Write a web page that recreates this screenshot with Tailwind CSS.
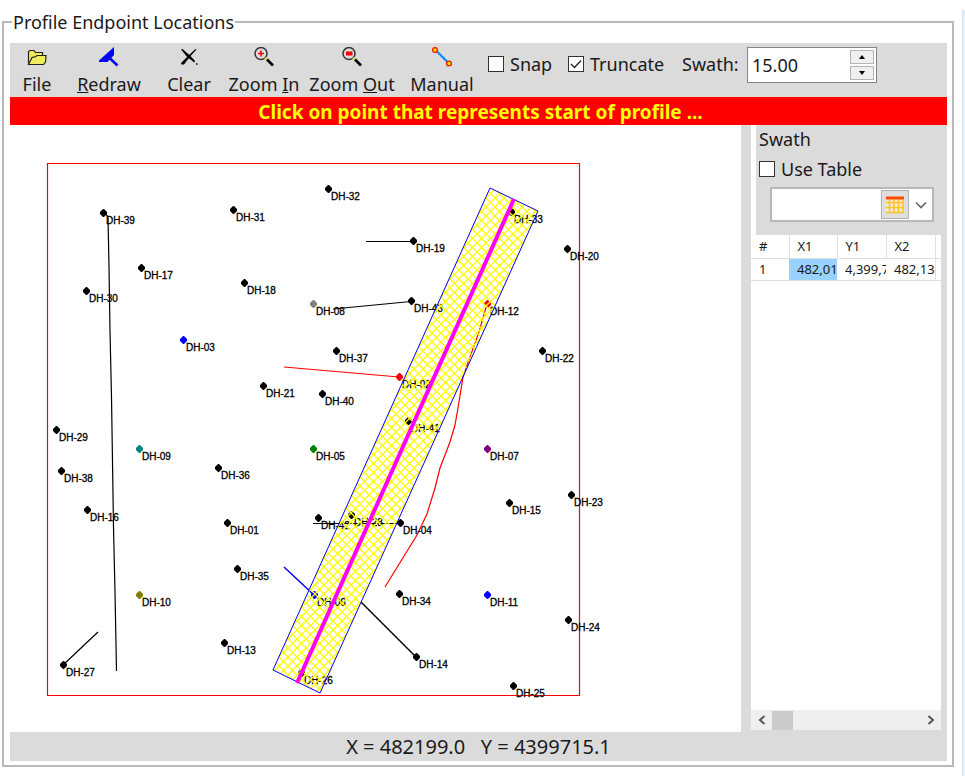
<!DOCTYPE html>
<html lang="en">
<head>
    <meta charset="UTF-8">
    <meta name="viewport" content="width=device-width, initial-scale=1.0">
    <title>Profile Endpoint Locations</title>
    <script src="https://cdn.jsdelivr.net/npm/@tailwindcss/browser@4"></script>
</head>
<body class="bg-white text-[#1a1a1a] font-['Noto_Sans','Open_Sans',sans-serif] text-lg leading-6">
    <div class="flex min-h-screen pl-0.5">
        <fieldset class="flex-1 min-w-0 self-start mt-2 border-2 border-[#b8b8b8] pl-1.5 pr-[5px] pt-[7px] pb-1">
            <legend class="ml-0.5 px-px leading-7">Profile Endpoint Locations</legend>

            <!-- Toolbar -->
            <div class="flex bg-[#dbdbdb] h-[54px]">
                <button type="button" class="w-[54px] flex flex-col items-center pt-1 whitespace-nowrap">
                    <svg class="w-5 h-[25px]" viewBox="0 0 20 25" aria-hidden="true">
                        <path d="M1.5 16.5V4.5L3 3.5H7L8.500 5.500H15.500V8.500" fill="#eeea5a" stroke="#222" stroke-width="1.2"/>
                        <path d="M1.5 17.5L5 10.5L9 9.5L10 8.5H19L18.5 15L16.5 17.5Z" fill="#f0ec60" stroke="#222" stroke-width="1.2"/>
                    </svg>
                    <span>File</span>
                </button>
                <button type="button" class="w-[90px] flex flex-col items-center pt-1 whitespace-nowrap">
                    <svg class="w-5 h-[25px]" viewBox="0 0 20 25" aria-hidden="true">
                        <path d="M15 0V8L8.500 15H0V13.500Z" fill="#00f"/>
                        <path d="M10 10.5L18.500 18.500" stroke="#00f" stroke-width="2.5"/>
                    </svg>
                    <span><u>R</u>edraw</span>
                </button>
                <button type="button" class="w-[70px] flex flex-col items-center pt-1 whitespace-nowrap">
                    <svg class="w-5 h-[25px]" viewBox="0 0 20 25" aria-hidden="true">
                        <path d="M2 2.5L3.500 2L11 8.500L16 14L15 14.500L9 11Z" fill="#000"/>
                        <path d="M17.500 2.500L11.500 9L5 17.500L2.500 17.500L2 16L8.500 9.500L16.500 2Z" fill="#000"/>
                        <path d="M10 9.500L15.500 15" stroke="#000" stroke-width="1.5"/>
                        <path d="M17 17h1.5" stroke="#000" stroke-width="1.5"/>
                    </svg>
                    <span>Clear</span>
                </button>
                <button type="button" class="w-20 flex flex-col items-center pt-1 whitespace-nowrap">
                    <svg class="w-5 h-[25px]" viewBox="0 0 20 25" aria-hidden="true">
                        <circle cx="7" cy="6.5" r="6" fill="#d8dcdc" stroke="#333" stroke-width="1.5"/>
                        <path d="M4 6.5h6M7 3.5v6" stroke="#f00" stroke-width="1.6"/>
                        <path d="M11 11L13.5 13" stroke="#dcd94a" stroke-width="2.5"/>
                        <path d="M13 12.5L19 18.5" stroke="#000" stroke-width="2.6"/>
                    </svg>
                    <span>Zoom <u>I</u>n</span>
                </button>
                <button type="button" class="w-24 flex flex-col items-center pt-1 whitespace-nowrap">
                    <svg class="w-5 h-[25px]" viewBox="0 0 20 25" aria-hidden="true">
                        <circle cx="7" cy="6.5" r="6" fill="#d8dcdc" stroke="#333" stroke-width="1.5"/>
                        <path d="M4 4.5h6.500v4H4z" fill="#f00"/>
                        <path d="M11 11L13.5 13" stroke="#dcd94a" stroke-width="2.5"/>
                        <path d="M13 12.5L19 18.5" stroke="#000" stroke-width="2.6"/>
                    </svg>
                    <span>Zoom <u>O</u>ut</span>
                </button>
                <button type="button" class="w-[84px] flex flex-col items-center pt-1 whitespace-nowrap">
                    <svg class="w-5 h-[25px]" viewBox="0 0 20 25" aria-hidden="true">
                        <path d="M3.5 3L17 16.5" stroke="#0a80ff" stroke-width="2"/>
                        <circle cx="3" cy="3" r="2.4" fill="#ffe000" stroke="#f21c00" stroke-width="1.4"/>
                        <circle cx="17" cy="16.5" r="2.4" fill="#ffe000" stroke="#f21c00" stroke-width="1.4"/>
                    </svg>
                    <span>Manual</span>
                </button>

                <div class="flex items-start pt-1 pl-1">
                    <label class="flex items-center gap-1.5 h-[34px] w-20">
                        <input type="checkbox" class="appearance-none size-4 border border-[#333] bg-white">
                        Snap
                    </label>
                    <label class="flex items-center gap-1.5 h-[34px] w-[114px]">
                        <span class="grid size-4 shrink-0">
                            <input type="checkbox" checked class="peer appearance-none size-4 border border-[#333] bg-white [grid-area:1/1]">
                            <svg class="size-4 hidden peer-checked:block pointer-events-none [grid-area:1/1]" viewBox="0 0 16 16" aria-hidden="true">
                                <path d="M3 8L6.5 11.5L13 4.5" fill="none" stroke="#222" stroke-width="1.3"/>
                            </svg>
                        </span>
                        Truncate
                    </label>
                    <label for="swath" class="leading-[34px] w-[65px]">Swath:</label>
                    <div class="flex w-[130px] h-9 border border-[#858585] bg-white p-0.5">
                        <input id="swath" type="text" value="15.00" class="flex-1 min-w-0 pl-0.5 outline-none">
                        <div class="w-6 flex flex-col gap-0.5">
                            <button type="button" aria-label="Increase" class="flex-1 grid place-items-center border border-[#b5b5b5] bg-[#f0f0f0]">
                                <svg class="w-1.5 h-1" viewBox="0 0 6 4" aria-hidden="true"><path d="M3 0L6 4H0Z"/></svg>
                            </button>
                            <button type="button" aria-label="Decrease" class="flex-1 grid place-items-center border border-[#b5b5b5] bg-[#f0f0f0]">
                                <svg class="w-1.5 h-1" viewBox="0 0 6 4" aria-hidden="true"><path d="M3 4L0 0H6Z"/></svg>
                            </button>
                        </div>
                    </div>
                </div>
            </div>

            <div class="bg-[#f00] text-[#ff0] text-[19px] font-bold text-center h-7 leading-[30px] pl-1">Click on point that represents start of profile ...</div>

            <div class="flex">
                <!-- Map of drill holes -->
                <svg id="map" class="flex-1 min-w-0 h-auto bg-white font-['Liberation_Sans',sans-serif] text-[10px]" viewBox="10 125 731 607" role="img" aria-label="Drill hole map">
                    <defs>
                        <pattern id="hatch" width="9" height="9" patternUnits="userSpaceOnUse">
                            <path d="M-1 -1L10 10M10 -1L-1 10" stroke="#ff0" stroke-width="1.3"/>
                        </pattern>
                    </defs>
                    <path d="M47.5 163.5H579.5V695.5H47.5Z" fill="none" stroke="#ff0000" stroke-width="1.2"/>
                    <g fill="none" stroke="#000" stroke-width="1.2">
                        <path d="M105 213L108 217L109 267L110 331L111.5 397L112.5 462L113.5 527L115 592L116.5 671"/>
                        <path d="M366 241.5H413"/>
                        <path d="M333 309L411 301.5"/>
                        <path d="M313 523.5H400"/>
                        <path d="M361 602L416 657" stroke-width="1.5"/>
                        <path d="M63 665L98 632"/>
                        <path d="M284 567L314 595" stroke="#00f" stroke-width="1.5"/>
                        <path d="M284 367L399 377" stroke="#f00"/>
                        <path d="M487 304L479 332L470 357L463 377L458 408L455 425L450 442L440 468L435 488L427 514L417 535L385 587" stroke="#f00"/>
                    </g>
                    <g id="holes"></g>
                    <path d="M490 188L538 211L320 693L273 670Z" fill="url(#hatch)" stroke="#00f"/>
                    <path d="M514 199L297 683" stroke="#f0f" stroke-width="4"/>
                </svg>

                <div class="w-[7px] bg-[#dbdbdb]"></div>

                <!-- Swath table -->
                <div class="w-[199px] flex flex-col bg-[#dbdbdb] pl-[3px] pr-1.5 pb-0.5">
                    <div class="h-[110px] border-l-[5px] border-white pl-[3px]">
                        <h2 class="h-7 leading-7">Swath</h2>
                        <label class="flex items-center gap-1.5 h-8">
                            <input type="checkbox" class="appearance-none size-4 border border-[#333] bg-white">
                            Use Table
                        </label>
                        <div class="relative ml-[11px] mr-[7px] mt-0.5 h-[35px]">
                            <select aria-label="Swath table" class="appearance-none w-full h-full border-2 border-[#b8b8b8] bg-white"><option></option></select>
                            <div class="absolute inset-y-[3px] right-[7px] flex items-center gap-1.5 pointer-events-none">
                                <span class="grid place-items-center w-7 h-[29px] border border-[#b0b0b0] bg-[#dedede]">
                                    <svg class="w-[18px] h-[18px]" viewBox="0 0 18 18" aria-hidden="true">
                                        <path d="M0 2h18v15H0z" fill="#f4ead0"/>
                                        <path d="M0 6.5h18M0 11.5h18M0 16.500h18M3.5 3v14M8 3v14M12.5 3v14M17 3v14" stroke="#fcc32c" stroke-width="1.5"/>
                                        <path d="M0 0.5h18v3H0z" fill="#ff4a00"/>
                                    </svg>
                                </span>
                                <svg class="w-3 h-2" viewBox="0 0 12 8" aria-hidden="true"><path d="M1 1.5L6 6.5L11 1.5" fill="none" stroke="#666" stroke-width="1.6"/></svg>
                            </div>
                        </div>
                    </div>
                    <div class="flex-1 bg-white overflow-hidden">
                        <table class="w-full table-fixed text-[13px] leading-5 text-left border-collapse">
                            <thead>
                                <tr class="h-[23px] border-b border-[#e0e0e0]">
                                    <th class="w-[38px] pl-2 font-normal border-r border-[#e0e0e0]">#</th>
                                    <th class="w-12 pl-2 font-normal border-r border-[#e0e0e0]">X1</th>
                                    <th class="w-[49px] pl-2 font-normal border-r border-[#e0e0e0]">Y1</th>
                                    <th class="w-[49px] pl-2 font-normal border-r border-[#e0e0e0]">X2</th>
                                    <th></th>
                                </tr>
                            </thead>
                            <tbody>
                                <tr class="h-[22px] border-b border-[#e0e0e0]">
                                    <td class="pl-2">1</td>
                                    <td class="pl-2 overflow-hidden whitespace-nowrap bg-[#99d1ff]">482,01</td>
                                    <td class="pl-2 overflow-hidden whitespace-nowrap">4,399,7</td>
                                    <td class="pl-2 overflow-hidden whitespace-nowrap border-r border-[#e0e0e0]">482,13</td>
                                    <td></td>
                                </tr>
                            </tbody>
                        </table>
                    </div>
                    <div class="flex items-center h-5 bg-[#efefef]">
                        <button type="button" aria-label="Scroll left" class="w-[21px] h-5 grid place-items-center">
                            <svg class="w-2 h-2.5" viewBox="0 0 8 10" aria-hidden="true"><path d="M6.5 1L2 5L6.5 9" fill="none" stroke="#555" stroke-width="2"/></svg>
                        </button>
                        <div class="w-[21px] h-[19px] bg-[#cbcbcb]"></div>
                        <button type="button" aria-label="Scroll right" class="ml-auto w-[21px] h-5 grid place-items-center">
                            <svg class="w-2 h-2.5" viewBox="0 0 8 10" aria-hidden="true"><path d="M1.5 1L6 5L1.5 9" fill="none" stroke="#555" stroke-width="2"/></svg>
                        </button>
                    </div>
                </div>
            </div>

            <div class="bg-[#dbdbdb] h-[29px] text-xl leading-[30px] text-center whitespace-pre">X = 482199.0   Y = 4399715.1</div>
        </fieldset>
        <div class="w-[3px] ml-2 mt-2.5 bg-[#e2f1ff] border-l border-[#cfe6fb]"></div>
    </div>

    <script>
        // [name, x, y, color]
        const holes = [
            ["DH-39", 103, 213], ["DH-31", 233, 210], ["DH-32", 328, 189], ["DH-19", 413, 241],
            ["DH-33", 511, 212], ["DH-20", 567, 249], ["DH-17", 141, 268], ["DH-30", 86, 291],
            ["DH-18", 244, 283], ["DH-08", 313, 304, "#808080"], ["DH-43", 411, 301], ["DH-12", 487, 304, "#f00"],
            ["DH-03", 183, 340, "#00f"], ["DH-37", 336, 351], ["DH-22", 542, 351], ["DH-02", 399, 377, "#f00"],
            ["DH-21", 263, 386], ["DH-40", 322, 394], ["DH-41", 408, 421], ["DH-29", 56, 430],
            ["DH-09", 139, 449, "#008080"], ["DH-05", 313, 449, "#008000"], ["DH-07", 487, 449, "#800080"], ["DH-38", 61, 471],
            ["DH-36", 218, 468], ["DH-23", 571, 495], ["DH-15", 509, 503], ["DH-16", 87, 510],
            ["DH-42", 318, 518], ["DH-28", 351, 515], ["DH-01", 227, 523], ["DH-04", 400, 523],
            ["DH-35", 237, 569], ["DH-10", 139, 595, "#808000"], ["DH-06", 314, 595, "#00f"], ["DH-34", 399, 594],
            ["DH-11", 487, 595, "#00f"], ["DH-24", 568, 620], ["DH-13", 224, 643], ["DH-14", 416, 657],
            ["DH-27", 63, 665], ["DH-26", 301, 673], ["DH-25", 513, 686],
        ];

        document.getElementById("holes").innerHTML = holes.map(([name, x, y, color]) => `
            <path d="M${x} ${y - 4}h1l3 3v2l-3 3h-1l-3 -3v-2z" fill="${color ?? '#000'}"/>
            <text x="${x + 3}" y="${y + 11}" stroke="#000" stroke-width="0.3">${name}</text>
        `).join("");
    </script>
</body>
</html>
